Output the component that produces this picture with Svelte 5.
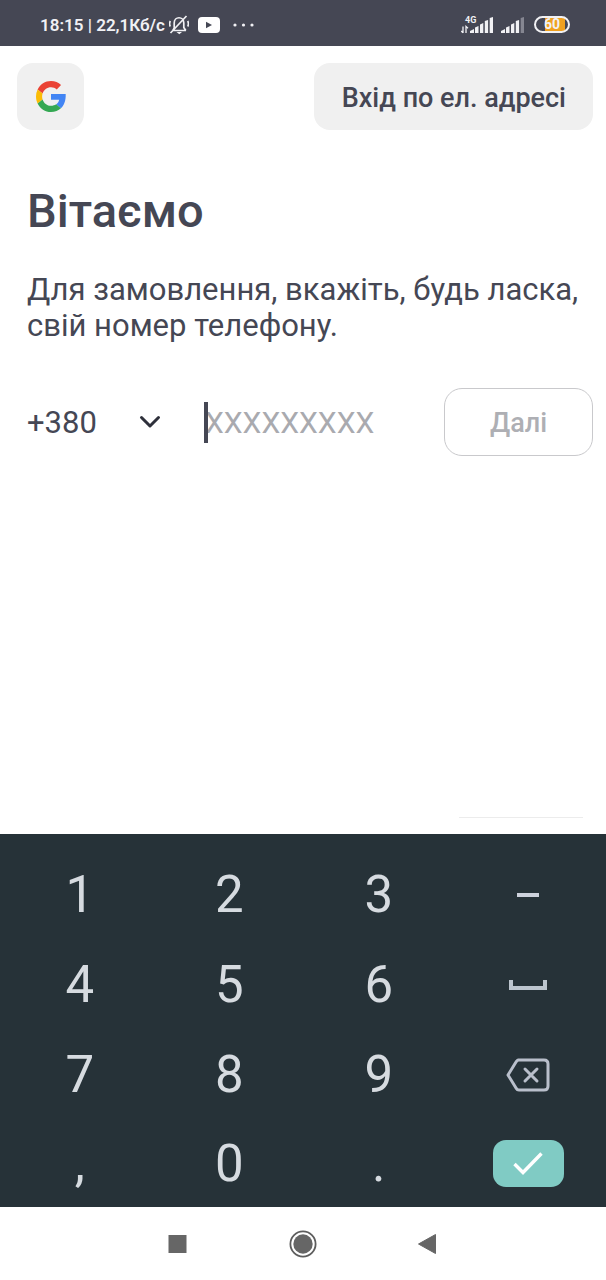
<script>
  const keys = ['1', '2', '3', 'dash', '4', '5', '6', 'space', '7', '8', '9', 'back', ',', '0', '.', 'done'];
  const labels = { dash: 'Дефіс', space: 'Пробіл', back: 'Видалити', done: 'Готово' };
  let phone = $state('');

  function press(key) {
    if (key === 'back') phone = phone.slice(0, -1);
    else if (/^\d$/.test(key) && phone.length < 9) phone += key;
  }
</script>

<div class="screen">
  <header class="status">
    <div class="status-group">
      <span class="clock">18:15 | 22,1Кб/с</span>
      <svg class="bell" width="20" height="20" viewBox="0 0 20 20" fill="none" stroke="#f1f1f4" stroke-width="1.7" aria-hidden="true">
        <path d="M3.500 15.500h13.500M5.200 13V8c0-7 9.600-7 9.600 0v4.500l2 3M3.800 15.500l1.500-2.500M1.300 6c-.8 1.500-.8 4 0 5.500M18.700 6c.8 1.500.8 4 0 5.500M17.500 1L1.500 18" />
        <path d="M7.500 17h5.500l-2.700 2.300z" fill="#f1f1f4" stroke="none" />
      </svg>
      <svg class="video" width="22" height="16" viewBox="0 0 22 16" aria-hidden="true">
        <rect width="22" height="16" rx="4" fill="#fff" />
        <path d="M8 4.800v6.400l6-3.200z" fill="#454754" />
      </svg>
      <svg width="22" height="4" viewBox="0 0 22 4" fill="#f1f1f4" aria-hidden="true">
        <circle cx="2" cy="2" r="1.600" /><circle cx="10.500" cy="2" r="1.600" /><circle cx="19" cy="2" r="1.600" />
      </svg>
    </div>
    <div class="status-group right">
      <div class="mobile">
        <span class="net">4G</span>
        <svg width="32" height="18" viewBox="0 0 32 18" fill="#f1f1f4" aria-hidden="true">
          <path d="M2 10.500V17M0.300 15L2 16.800M5 17v-6.500l2 1.800" fill="none" stroke="#f1f1f4" stroke-width="1.300" />
          <path d="M9 15l4-2v4H9zM14 11.500l3.500-1.500v7H14zM19 8.500l3.300-1.500v10H19zM23.800 5l3.300-1v13h-3.300zM28.700 2l3.300-1v16h-3.300z" />
        </svg>
      </div>
      <svg class="signal" width="23" height="18" viewBox="0 0 23 18" fill="#f1f1f4" aria-hidden="true">
        <path d="M0 15l4-2v4H0zM5 11.500l3.500-1.500v7H5zM10 8.500l3.300-1.500v10H10zM14.800 5l3.300-1v13h-3.300z" />
        <path d="M19.700 2l3.300-1v16h-3.300z" fill="#858691" />
      </svg>
      <span class="battery">60</span>
    </div>
  </header>

  <main>
    <div class="top">
      <button class="soft google" aria-label="Google">
        <svg width="30" height="31" viewBox="0 0 48 48" preserveAspectRatio="none" aria-hidden="true">
          <path fill="#ea4335" d="M24 9.500c3.540 0 6.710 1.220 9.210 3.600l6.850-6.850C35.900 2.380 30.470 0 24 0 14.620 0 6.510 5.380 2.560 13.220l7.980 6.190C12.430 13.720 17.740 9.500 24 9.500z" />
          <path fill="#4285f4" d="M47.500 20H24v9h13c-.6 3-2.300 5.500-4.800 7.200l7.700 6C44.400 38 48 31 47.500 20z" />
          <path fill="#fbbc05" d="M10.530 28.590A14.500 14.500 0 0 1 9.770 24c0-1.600.27-3.140.76-4.590l-7.980-6.190A23.900 23.900 0 0 0 0 24c0 3.870.92 7.530 2.560 10.780z" />
          <path fill="#34a853" d="M24 48c6.480 0 11.930-2.130 15.890-5.810l-7.730-6c-2.150 1.450-4.920 2.300-8.160 2.300-6.260 0-11.570-4.220-13.470-9.910l-7.970 6.200C6.510 42.620 14.620 48 24 48z" />
        </svg>
      </button>
      <button class="soft email">Вхід по ел. адресі</button>
    </div>

    <h1>Вітаємо</h1>
    <p>Для замовлення, вкажіть, будь ласка, свій номер телефону.</p>

    <form onsubmit={(e) => e.preventDefault()}>
      <button type="button" class="code">
        +380
        <svg width="22" height="14" viewBox="0 0 22 14" fill="none" stroke="#2e303b" stroke-width="3" stroke-linecap="round" stroke-linejoin="round" aria-hidden="true">
          <path d="M2.500 2.500l8.500 8.500 8.500-8.500" />
        </svg>
      </button>
      <div class="field">
        <input type="tel" aria-label="Номер телефону" placeholder="XXXXXXXXX" bind:value={phone} />
        {#if !phone}<span class="caret"></span>{/if}
      </div>
      <button class="next" disabled={phone.length < 9}>Далі</button>
    </form>
    <hr />
  </main>

  <section class="keyboard" aria-label="Клавіатура">
    {#each keys as key}
      <button class="key" aria-label={labels[key] ?? key} onclick={() => press(key)}>
        {#if key === 'dash'}
          <svg width="22" height="4" viewBox="0 0 22 4"><rect width="22" height="4" fill="#cdd2dc" /></svg>
        {:else if key === 'space'}
          <svg width="38" height="10" viewBox="0 0 38 10" fill="none" stroke="#bcc5ce" stroke-width="4"><path d="M2 0v8h34V0" /></svg>
        {:else if key === 'back'}
          <svg width="44" height="34" viewBox="0 0 44 34" fill="none" stroke="#b9bfcb" stroke-width="3" stroke-linejoin="round">
            <path d="M12 2h26q4 0 4 4v22q0 4-4 4H13q-2 0-3-2L2 17l8-13q1-2 3-2z" />
            <path d="M19 11l12 12M31 11L19 23" stroke-linecap="round" />
          </svg>
        {:else if key === 'done'}
          <span class="done">
            <svg width="30" height="23" viewBox="0 0 30 23" fill="none" stroke="#fff" stroke-width="3.400"><path d="M1.500 12l8.500 8.500L28.500 1.500" /></svg>
          </span>
        {:else}
          {key}
        {/if}
      </button>
    {/each}
  </section>

  <nav>
    <button aria-label="Останні програми"><svg width="28" height="28" viewBox="0 0 28 28"><rect x="4.500" y="5" width="18" height="18" fill="#666" /></svg></button>
    <button aria-label="Головний екран">
      <svg width="28" height="28" viewBox="0 0 28 28"><circle cx="14" cy="14" r="12.600" fill="none" stroke="#5d5d5d" stroke-width="1.800" /><circle cx="14" cy="14" r="9.700" fill="#666" /></svg>
    </button>
    <button aria-label="Назад"><svg width="28" height="28" viewBox="0 0 28 28"><path d="M4.500 14L21.500 4.500v19z" fill="#666" stroke="#666" stroke-linejoin="round" /></svg></button>
  </nav>
</div>

<style>
  :global(body) {
    margin: 0;
    background: #fff;
  }
  .screen {
    display: flex;
    flex-direction: column;
    min-height: 100vh;
    font-family: Roboto, "Noto Sans", sans-serif;
    color: #454754;
  }
  button,
  input {
    margin: 0;
    padding: 0;
    border: 0;
    background: none;
    color: inherit;
    font: inherit;
  }
  svg {
    display: block;
    flex: none;
  }
  .status {
    display: flex;
    justify-content: space-between;
    align-items: center;
    height: 46px;
    padding: 3px 36px 0 40px;
    box-sizing: border-box;
    background: #454754;
    color: #f1f1f4;
  }
  .status-group {
    display: flex;
    align-items: center;
  }
  .clock {
    font-size: 17px;
    font-weight: 600;
    white-space: nowrap;
  }
  .bell {
    margin-left: 4px;
  }
  .video {
    margin: 0 13px 0 9px;
  }
  .right {
    gap: 8px;
  }
  .mobile {
    position: relative;
  }
  .net {
    position: absolute;
    left: 4px;
    top: -1px;
    font-size: 9px;
    line-height: 10px;
    font-weight: 700;
  }
  .battery {
    width: 36px;
    height: 17px;
    margin-left: 2px;
    box-sizing: border-box;
    border: 2px solid #f1f1f4;
    border-radius: 9px;
    background: linear-gradient(90deg, transparent 28%, #f0a01e 28%, #f0a01e 92%, transparent 92%);
    font-size: 14px;
    line-height: 13px;
    font-weight: 700;
    text-align: center;
  }
  main {
    flex: 1;
    display: flex;
    flex-direction: column;
    padding: 17px 13px 16px 17px;
  }
  .top {
    display: flex;
    justify-content: space-between;
  }
  .soft {
    height: 67px;
    border-radius: 16px;
    background: #f0f0f0;
  }
  .google {
    display: grid;
    place-items: center;
    width: 67px;
  }
  .email {
    padding: 2px 27px 0 28px;
    font-size: 27px;
    font-weight: 500;
  }
  h1 {
    margin: 54px 10px 0;
    font-size: 47px;
    line-height: 54px;
    font-weight: 500;
  }
  p {
    margin: 34px 0 0 10px;
    font-size: 31px;
    line-height: 36px;
  }
  form {
    display: flex;
    align-items: center;
    margin: 44px 0 0 10px;
    font-size: 31px;
  }
  .code {
    display: flex;
    align-items: center;
    justify-content: space-between;
    width: 134px;
  }
  .field {
    position: relative;
    flex: 1;
    min-width: 0;
    margin: 0 24px 0 43px;
  }
  input {
    display: block;
    width: 100%;
    height: 41px;
    padding-left: 1px;
    box-sizing: border-box;
    outline: none;
    font-size: 30px;
  }
  input::placeholder {
    color: #a9aaaf;
    opacity: 1;
  }
  .caret {
    position: absolute;
    left: 0;
    top: 0;
    width: 4px;
    height: 41px;
    background: #454754;
  }
  .next {
    width: 149px;
    height: 68px;
    padding-top: 2px;
    border: 1px solid #c9c9cc;
    border-radius: 18px;
    color: #454754;
    font-size: 27px;
    font-weight: 500;
  }
  .next:disabled {
    color: #aeafb4;
  }
  hr {
    width: 124px;
    height: 1px;
    margin: auto 10px 0 auto;
    border: 0;
    background: #ececec;
  }
  .keyboard {
    display: grid;
    grid-template-columns: repeat(4, 1fr);
    grid-template-rows: repeat(3, 90px) 87px;
    padding: 16px 3px 0 5px;
    background: #263238;
    color: #d6dbe0;
  }
  .key {
    display: grid;
    place-items: center;
    font-size: 51px;
    line-height: 58px;
  }
  .done {
    display: grid;
    place-items: center;
    width: 71px;
    height: 47px;
    border-radius: 13px;
    background: #80cbc4;
  }
  nav {
    display: flex;
    justify-content: center;
    align-items: center;
    gap: 97px;
    height: 73px;
  }
  nav button {
    width: 28px;
  }
</style>
